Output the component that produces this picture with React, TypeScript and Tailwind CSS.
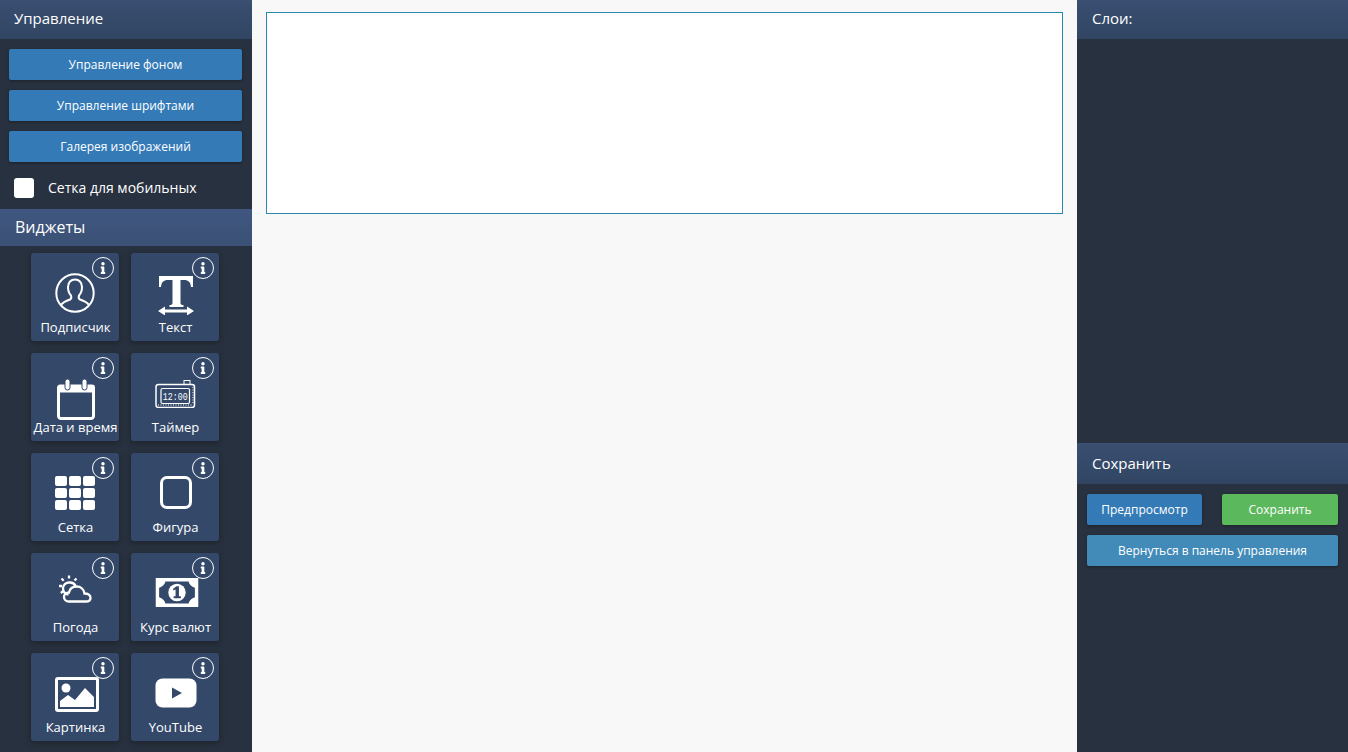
import React from "react";
import { FaInfo } from "react-icons/fa";

const font = { fontFamily: '"Open Sans", "Noto Sans", sans-serif' };

const P = { fill: "none", stroke: "white" } as const;

const icons: Record<string, React.ReactNode> = {
  user: (
    <svg width="40" height="40" viewBox="0 0 40 40">
      <circle cx="20" cy="20" r="18.7" {...P} strokeWidth="2" />
      <path d="M6 32c2-3 6-4.500 9-5.500 1.500-.8 1.500-2.500 1-4-2-2-3-5-3-8.500 0-4.500 3-7.500 7-7.500s7 3 7 7.500c0 3.500-1 6.500-3 8.500-.5 1.500-.5 3.200 1 4 3 1 7 2.500 9 5.500" {...P} strokeWidth="2" />
    </svg>
  ),
  text: (
    <svg width="38" height="40" viewBox="0 0 38 40">
      <path d="M2 1h34v11h-2c-.5-5-2.500-7-7-7h-3.500v23c0 1.500 1 2 3 2v2H12.500v-2c2 0 3-.5 3-2V5H11C6.500 5 4.500 7 4 12H2z" fill="white" />
      <path d="M5 36h28" {...P} strokeWidth="3" />
      <path d="M8 31.500l-7 4.500 7 4.500zM30 31.500l7 4.500-7 4.500z" fill="white" />
    </svg>
  ),
  date: (
    <svg width="38" height="42" viewBox="0 0 38 42">
      <path d="M3 8h32a1.500 1.500 0 0 1 1.500 1.500V38a2.500 2.500 0 0 1-2.500 2.500H4A2.500 2.500 0 0 1 1.500 38V9.500A1.500 1.500 0 0 1 3 8z" {...P} strokeWidth="3" />
      <path d="M1.500 14.500h35V9H1.500z" fill="white" />
      <rect x="8" y="1" width="5" height="11" rx="2.500" fill="white" stroke="#34496a" strokeWidth="1" />
      <rect x="25" y="1" width="5" height="11" rx="2.500" fill="white" stroke="#34496a" strokeWidth="1" />
    </svg>
  ),
  timer: (
    <svg width="41" height="28" viewBox="0 0 41 28">
      <rect x="1" y="4.500" width="38.500" height="23" rx="2.500" {...P} strokeWidth="1.500" />
      <rect x="6" y="8.500" width="28.500" height="15" rx="1.500" {...P} strokeWidth="1.200" />
      <rect x="29" y="0.500" width="6" height="4" {...P} strokeWidth="1" />
      <path d="M3 25h35" {...P} strokeWidth="1" strokeDasharray="1 1.500" />
      <path d="M38 7v17" {...P} strokeWidth="1" strokeDasharray="1 1.500" />
      <text x="20.300" y="20" textAnchor="middle" fill="white" fontSize="11" fontFamily="'Liberation Mono', monospace" textLength="25" lengthAdjust="spacingAndGlyphs">12:00</text>
    </svg>
  ),
  grid: (
    <div className="grid grid-cols-3 gap-[2px]">
      {Array.from({ length: 9 }).map((_, i) => (
        <div key={i} className="w-[12px] h-[10px] bg-white rounded-[2px]" />
      ))}
    </div>
  ),
  shape: <div className="w-[32px] h-[33px] border-[3px] border-white rounded-[7px]" />,
  weather: (
    <svg width="34" height="28" viewBox="0 0 34 28">
      <path d="M9.500 19.500a6 6 0 0 1 1-12c3-.2 5 1.300 6.200 3.500" {...P} strokeWidth="2.300" />
      <path d="M10 26.500c-3 0-5-2-5-4.500s2-4.500 5-4.500c.8-3.500 3.500-6 7.500-6 4.500 0 7.500 3 8 7 3-.2 6 1.500 6 4.200 0 2.500-2 3.800-4.500 3.800z" {...P} strokeWidth="2.300" />
      <path d="M10 .5v3M2.500 3.500l2.200 2.200M0 11h3M1.800 18l2.300-1.800M17.500 3.500l-2 2" {...P} strokeWidth="2.300" />
    </svg>
  ),
  money: (
    <svg width="44" height="29" viewBox="0 0 44 30">
      <path fillRule="evenodd" d="M0 0h44v30H0zM10 3.500c-.5 3-3 5.500-6.500 6.500v10c3.500 1 6 3.500 6.500 6.500h24c.5-3 3-5.500 6.500-6.500V10C37 9 34.500 6.500 34 3.500z" fill="white" />
      <circle cx="22" cy="15" r="9" fill="white" />
      <path d="M18.500 21h7.500v-2h-2V8.500h-2.500L18 11v2l2.500-1v7h-2z" fill="#34496a" />
    </svg>
  ),
  image: (
    <svg width="44" height="35" viewBox="0 0 44 35">
      <rect x="1.500" y="1.500" width="41" height="32" rx="1.500" {...P} strokeWidth="3" />
      <circle cx="11" cy="11" r="4.500" fill="white" />
      <path d="M5 30v-6l8-6 7 5 10-12 9 9v10z" fill="white" />
    </svg>
  ),
  youtube: (
    <svg width="42" height="30" viewBox="0 0 42 30">
      <rect x="0.500" y="0.500" width="41" height="29" rx="7" fill="white" />
      <path d="M17 9.500l10 5.500-10 5.500z" fill="#34496a" />
    </svg>
  ),
};

const widgets = [
  { label: "Подписчик", icon: "user", top: "pt-[20px]", shift: "pl-[0px]" },
  { label: "Текст", icon: "text", top: "pt-[22px]", shift: "pl-[1px]" },
  { label: "Дата и время", icon: "date", top: "pt-[25px]", shift: "pl-[2px]" },
  { label: "Таймер", icon: "timer", top: "pt-[27px]", shift: "pl-[1px]" },
  { label: "Сетка", icon: "grid", top: "pt-[23px]", shift: "pl-[0px]" },
  { label: "Фигура", icon: "shape", top: "pt-[23px]", shift: "pl-[2px]" },
  { label: "Погода", icon: "weather", top: "pt-[22px]", shift: "pl-[2px]" },
  { label: "Курс валют", icon: "money", top: "pt-[25px]", shift: "pl-[4px]" },
  { label: "Картинка", icon: "image", top: "pt-[24px]", shift: "pl-[3px]" },
  { label: "YouTube", icon: "youtube", top: "pt-[25px]", shift: "pl-[2px]" },
];

function Widget({ label, icon, top, shift }: { label: string; icon: string; top: string; shift: string }) {
  return (
    <div className={`relative w-[88px] h-[88px] bg-[#34496a] rounded-[3px] shadow-[0_2px_6px_rgba(0,0,0,0.3)] flex flex-col items-center ${top} ${shift}`}>
      <div className="absolute top-[4px] right-[5px] w-[22px] h-[22px] rounded-full border border-white flex items-center justify-center text-white">
        <FaInfo size={12} />
      </div>
      <div className="flex justify-center">{icons[icon]}</div>
      <div className="absolute bottom-[4px] left-[1px] right-0 text-center text-[13px] leading-[20px] whitespace-nowrap text-white">{label}</div>
    </div>
  );
}

function Btn({ color, className = "", children }: { color: string; className?: string; children: React.ReactNode }) {
  return (
    <button className={`h-[31px] rounded-[2px] text-white text-[12px] shadow-[0_1px_3px_rgba(0,0,0,0.35)] ${color} ${className}`}>
      {children}
    </button>
  );
}

export default function App() {
  return (
    <div className="flex h-[752px] w-[1348px] overflow-hidden bg-[#f8f8f8]" style={font}>
      <aside className="w-[252px] shrink-0 bg-[#28313f] flex flex-col overflow-hidden">
        <header className="h-[39px] shrink-0 bg-gradient-to-b from-[#3a4f71] to-[#314563] flex items-center pl-[14px] pb-[2px] text-white text-[15px]">Управление</header>
        <div className="flex flex-col gap-[10px] pt-[10px] px-[9px] pr-[10px]">
          <Btn color="bg-[#337ab7]">Управление фоном</Btn>
          <Btn color="bg-[#337ab7]">Управление шрифтами</Btn>
          <Btn color="bg-[#337ab7]">Галерея изображений</Btn>
        </div>
        <label className="h-[47px] shrink-0 flex items-center pl-[14px] pt-[5px] gap-[14px] text-white text-[14px]">
          <span className="w-[20px] h-[20px] bg-white rounded-[3px]" />
          <span className="pb-[2px]">Сетка для мобильных</span>
        </label>
        <header className="h-[37px] shrink-0 bg-gradient-to-b from-[#3f5680] to-[#3b5175] flex items-center pl-[15px] pb-[1px] text-white text-[16px]">Виджеты</header>
        <div className="grid grid-cols-[88px_88px] gap-x-[12px] gap-y-[12px] pt-[7px] pl-[31px]">
          {widgets.map((w) => (
            <Widget key={w.label} {...w} />
          ))}
        </div>
      </aside>
      <main className="flex-1 pt-[12px] pl-[14px] pr-[14px]">
        <div className="h-[202px] bg-white border border-[#2a87ad]" />
      </main>
      <aside className="w-[271px] shrink-0 bg-[#28313f] flex flex-col">
        <header className="h-[39px] shrink-0 bg-gradient-to-b from-[#3a4f71] to-[#314563] flex items-center pl-[15px] pb-[2px] text-white text-[15px]">Слои:</header>
        <div className="h-[404px] shrink-0" />
        <header className="h-[41px] shrink-0 bg-gradient-to-b from-[#3a4f71] to-[#314563] flex items-center pl-[15px] text-white text-[15px]">Сохранить</header>
        <div className="flex flex-col gap-[10px] pt-[10px] pl-[10px] pr-[10px]">
          <div className="flex justify-between">
            <Btn color="bg-[#337ab7]" className="w-[115px]">Предпросмотр</Btn>
            <Btn color="bg-[#5cb85c]" className="w-[116px]">Сохранить</Btn>
          </div>
          <Btn color="bg-[#428bb9]">Вернуться в панель управления</Btn>
        </div>
      </aside>
    </div>
  );
}
